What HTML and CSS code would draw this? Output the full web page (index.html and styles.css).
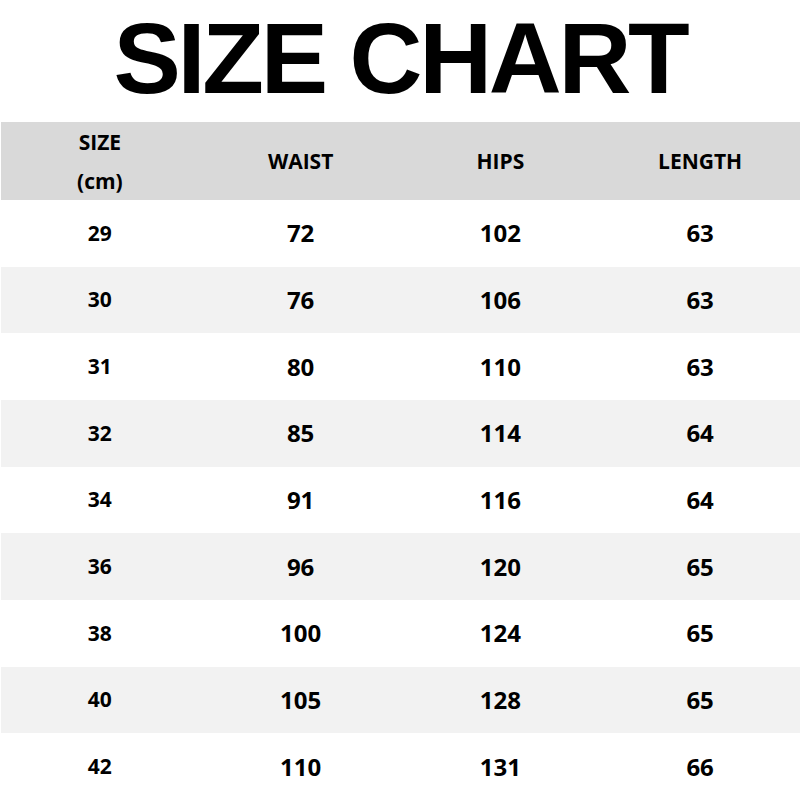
FILE: index.html
```html
<!DOCTYPE html>
<html>
<head>
<meta charset="utf-8">
<link rel="stylesheet" href="styles.css">
</head>
<body>
<div class="page">
  <h1 class="title">SIZE CHART</h1>
  <div class="chart">
    <div class="row head">
      <div class="cell size"><span>SIZE</span><span>(cm)</span></div>
      <div class="cell">WAIST</div>
      <div class="cell">HIPS</div>
      <div class="cell">LENGTH</div>
    </div>
    <div class="row"><div class="cell size">29</div><div class="cell">72</div><div class="cell">102</div><div class="cell">63</div></div>
    <div class="row alt"><div class="cell size">30</div><div class="cell">76</div><div class="cell">106</div><div class="cell">63</div></div>
    <div class="row"><div class="cell size">31</div><div class="cell">80</div><div class="cell">110</div><div class="cell">63</div></div>
    <div class="row alt"><div class="cell size">32</div><div class="cell">85</div><div class="cell">114</div><div class="cell">64</div></div>
    <div class="row"><div class="cell size">34</div><div class="cell">91</div><div class="cell">116</div><div class="cell">64</div></div>
    <div class="row alt"><div class="cell size">36</div><div class="cell">96</div><div class="cell">120</div><div class="cell">65</div></div>
    <div class="row"><div class="cell size">38</div><div class="cell">100</div><div class="cell">124</div><div class="cell">65</div></div>
    <div class="row alt"><div class="cell size">40</div><div class="cell">105</div><div class="cell">128</div><div class="cell">65</div></div>
    <div class="row"><div class="cell size">42</div><div class="cell">110</div><div class="cell">131</div><div class="cell">66</div></div>
  </div>
</div>
</body>
</html>
```

FILE: styles.css
```css
* { box-sizing: border-box; }
html, body { margin: 0; padding: 0; background: #fff; }
.page { width: 800px; height: 800px; overflow: hidden; }
.title {
  margin: 0;
  height: 122px;
  display: flex;
  align-items: center;
  justify-content: center;
  font-family: "Liberation Sans", Arial, sans-serif;
  font-weight: 700;
  font-size: 101px;
  line-height: 1;
  color: #000;
  padding-bottom: 6px;
  padding-left: 0;
  letter-spacing: -3.3px;
}
.chart { display: flex; flex-direction: column; padding-left: 1px; }
.row {
  display: grid;
  grid-template-columns: repeat(4, 1fr);
  height: 66.67px;
  font-family: "Open Sans", "Noto Sans", sans-serif;
  font-weight: 700;
  color: #000;
  font-size: 24px;
}
.row.head { height: 78px; background: #d9d9d9; font-size: 21px; }
.row.alt { background: #f2f2f2; }
.cell {
  display: flex;
  flex-direction: column;
  align-items: center;
  justify-content: center;
  line-height: 1;
}
.cell.size { font-size: 21px; padding-right: 2px; }
.head .cell.size { font-size: 21px; gap: 18px; padding-top: 1px; }
```
